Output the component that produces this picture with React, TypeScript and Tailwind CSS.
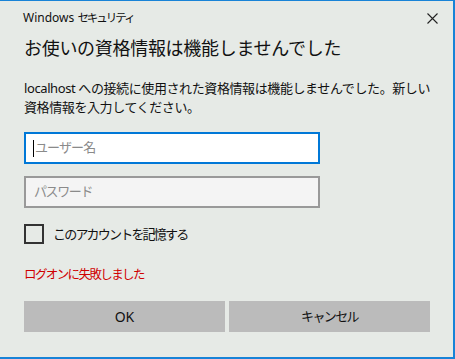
import React from "react";

const font = { fontFamily: '"Noto Sans", "Noto Sans CJK JP", sans-serif' };

export default function App() {
  return (
    <div
      className="w-[455px] h-[359px] bg-[#e6eae6] border-t border-r-2 border-b-2 border-[#1883d7] overflow-hidden flex flex-col text-[#1f1f1f]"
      style={font}
    >
      <div className="flex items-center justify-between pl-[23px] pr-[15px] h-[32px] pt-[1px]">
        <span className="text-[12px] leading-none text-[#111]">
          Windows <span className="text-[11.5px] tracking-[-2px]">セキュリティ</span>
        </span>
        <svg width="11" height="11" viewBox="0 0 11 11" className="mt-[1px]">
          <path d="M0.5 0.5 L10.5 10.5 M10.5 0.5 L0.5 10.5" stroke="#222" strokeWidth="1.1" />
        </svg>
      </div>
      <div className="pl-[24px] mt-[2px] text-[18px] leading-[26px] tracking-[-0.3px] text-[#111]">
        お使いの資格情報は機能しませんでした
      </div>
      <div className="pl-[24px] pr-[20px] mt-[18px] text-[13px] leading-[19px] tracking-[-0.4px] text-[#111]">
        localhost への接続に使用された資格情報は機能しませんでした。新しい資格情報を入力してください。
      </div>
      <div className="pl-[24px] mt-[15px] flex flex-col gap-[12px]">
        <div className="w-[296px] h-[32px] border-2 border-[#0078d7] bg-white flex items-center pl-[7px]">
          <span className="w-px h-[17px] bg-black" />
          <span className="text-[13px] tracking-[-0.9px] text-[#8a8a8a] ml-[1px]">ユーザー名</span>
        </div>
        <div className="w-[296px] h-[32px] border-2 border-[#999] bg-[#f4f4f4] flex items-center pl-[8px]">
          <span className="text-[13px] tracking-[-1.4px] text-[#8a8a8a]">パスワード</span>
        </div>
      </div>
      <div className="pl-[24px] mt-[16px] flex items-center gap-[9px]">
        <span className="w-[20px] h-[20px] border-2 border-[#333]" />
        <span className="text-[13px] leading-[20px] tracking-[-1.8px] text-[#111]">このアカウントを記憶する</span>
      </div>
      <div className="pl-[24px] mt-[21px] text-[12.5px] leading-[20px] tracking-[-1.6px] text-[#d00000]">
        ログオンに失敗しました
      </div>
      <div className="pl-[24px] mt-[16px] flex gap-[4px]">
        <button className="w-[201px] h-[31px] bg-[#bbbbbb] text-[14px] text-[#111]">OK</button>
        <button className="w-[201px] h-[31px] bg-[#bbbbbb] text-[13px] tracking-[-1.6px] text-[#111]">キャンセル</button>
      </div>
    </div>
  );
}
